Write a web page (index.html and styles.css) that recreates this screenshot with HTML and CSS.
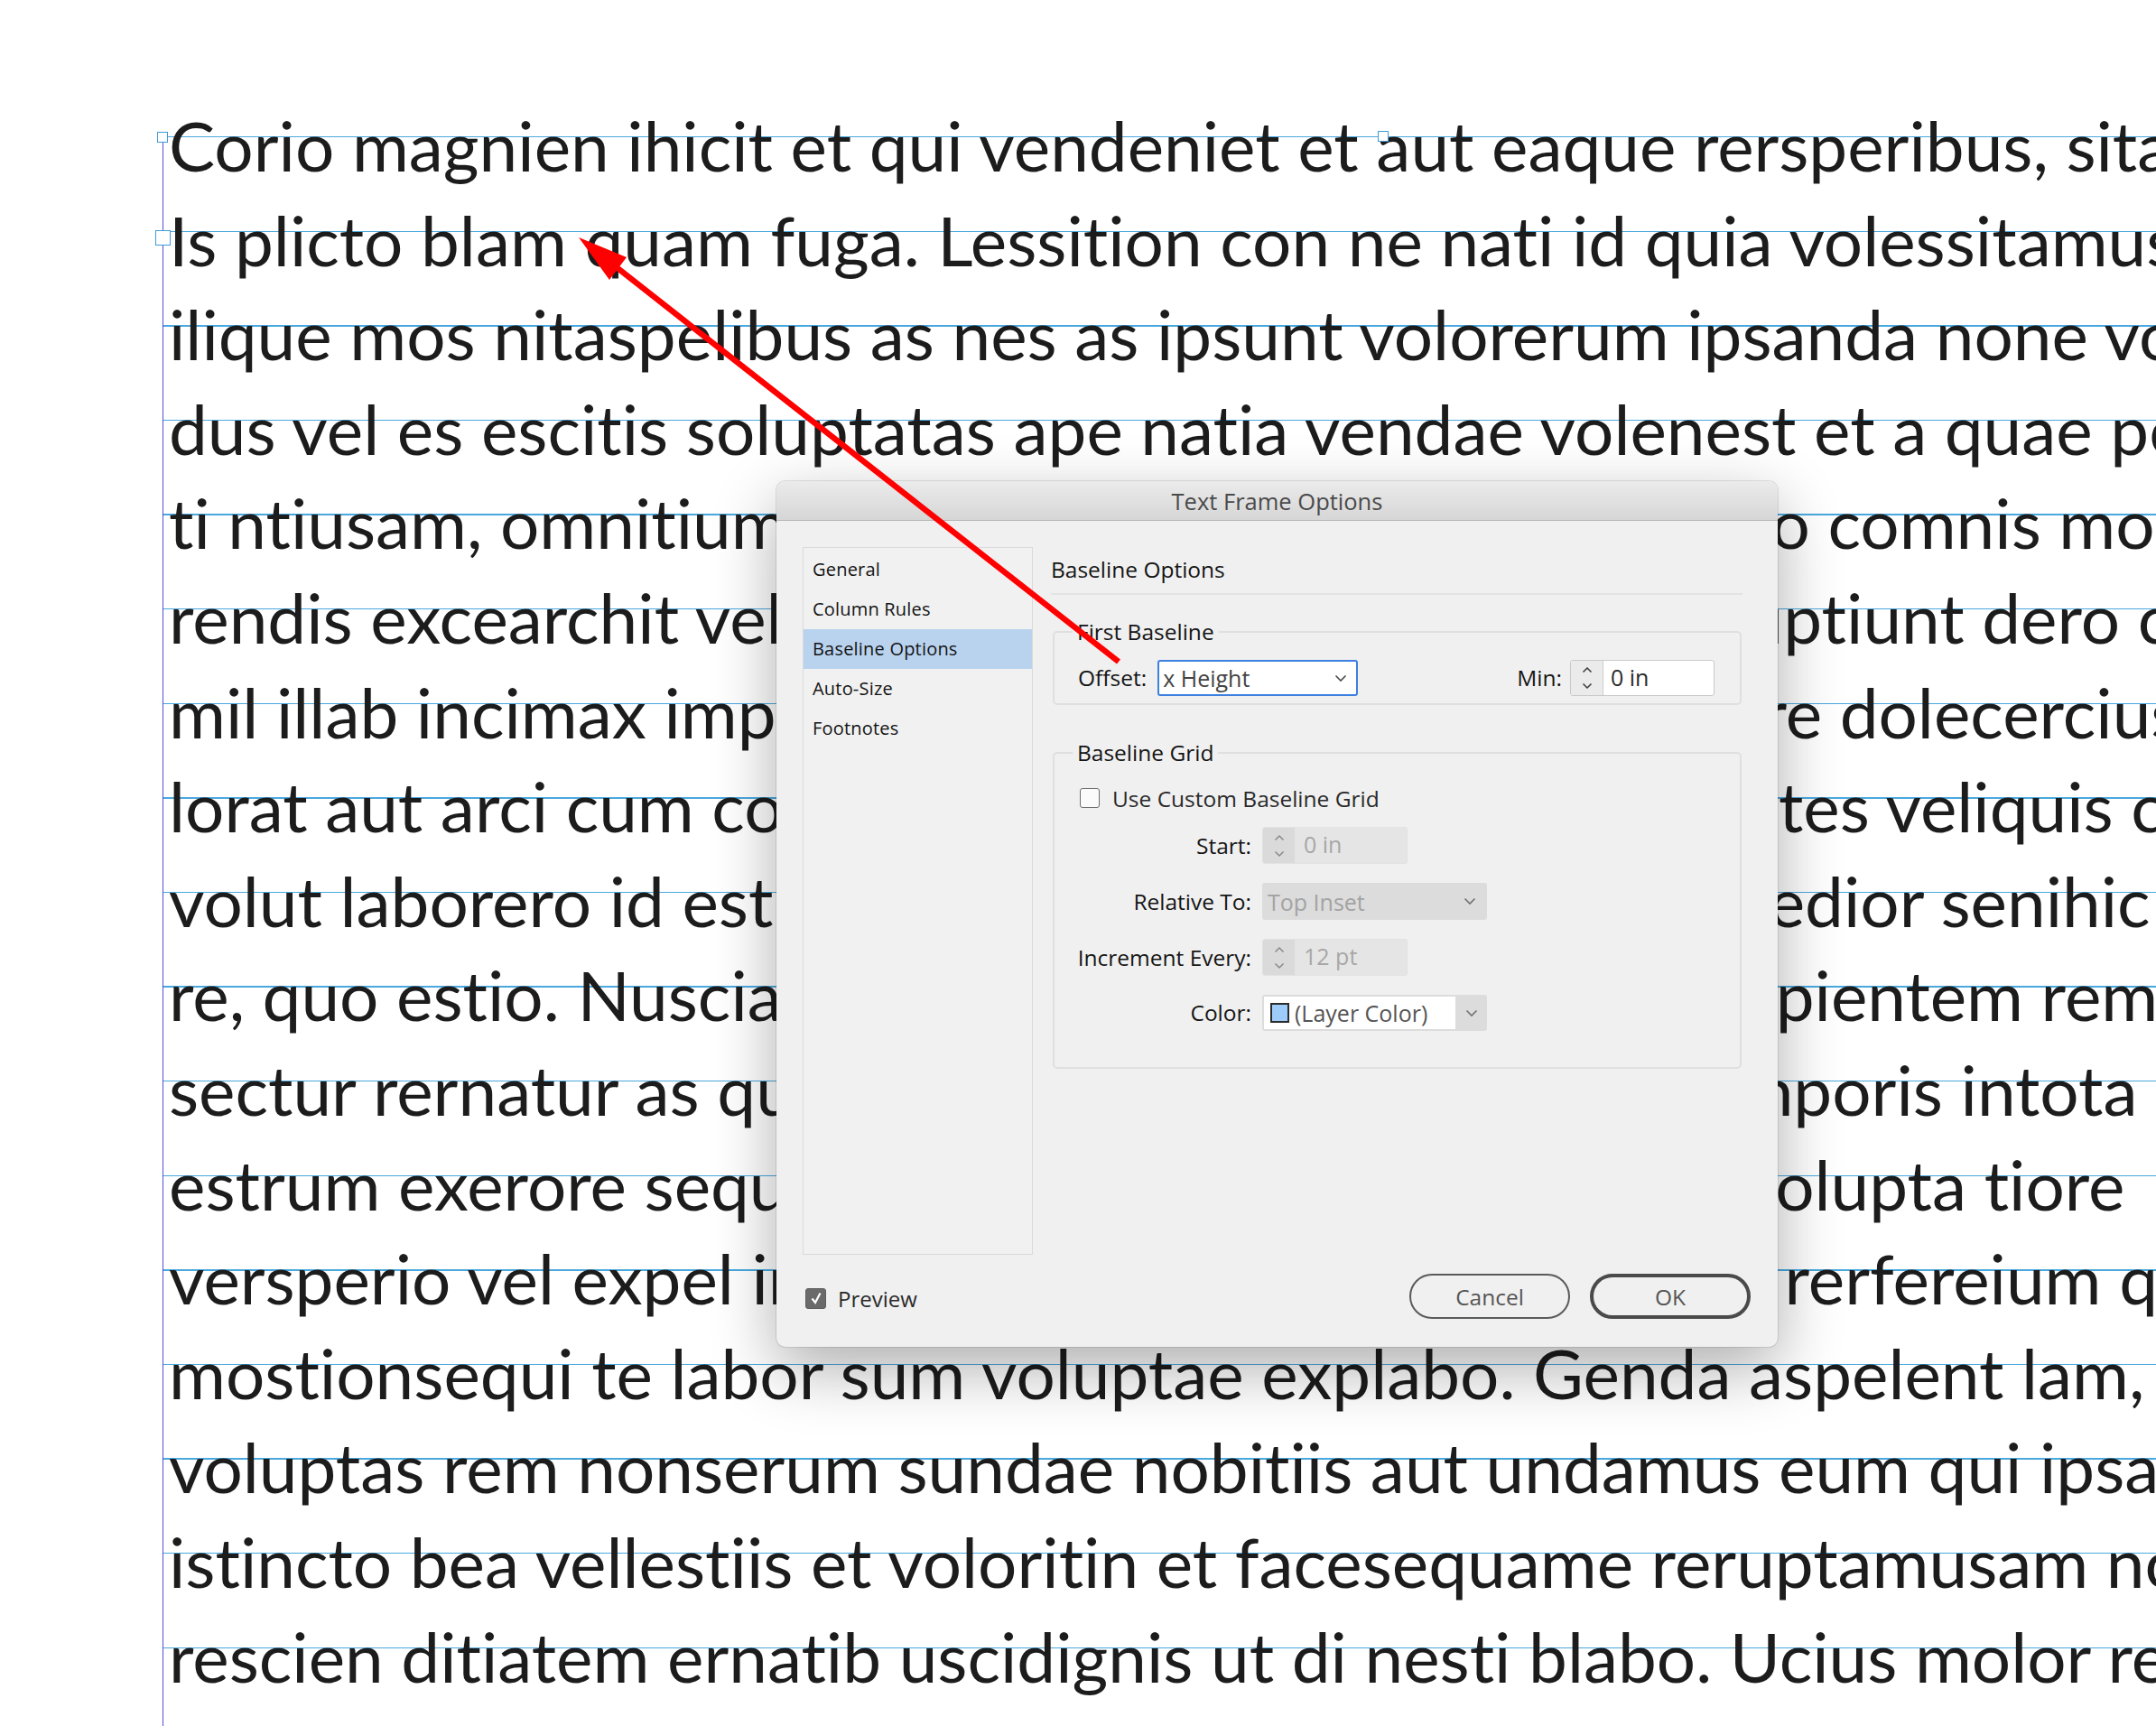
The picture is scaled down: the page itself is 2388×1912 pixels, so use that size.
FILE: index.html
```html
<!DOCTYPE html>
<html lang="en">
<head>
<meta charset="utf-8">
<title>Text Frame Options</title>
<link rel="stylesheet" href="styles.css">
</head>
<body>
<div class="page">
  <div class="frame">
    <div class="story">
      <div class="line">Corio magnien ihicit et qui vendeniet et aut eaque rersperibus, sitat</div>
      <div class="line">Is plicto blam quam fuga. Lessition con ne nati id quia volessitamus</div>
      <div class="line">ilique mos nitaspelibus as nes as ipsunt volorerum ipsanda none volor</div>
      <div class="line">dus vel es escitis soluptatas ape natia vendae volenest et a quae porem</div>
      <div class="line">ti ntiusam, omnitium aut ut aut quatem nonsequi di, to comnis mo</div>
      <div class="line">rendis excearchit vel ipsande nim quid quos, cum voluptiunt dero c</div>
      <div class="line">mil illab incimax imporem ut aliqui officiis quos ventore dolecercius</div>
      <div class="line">lorat aut arci cum consequi a ulparum estrum doloreptes veliquis c</div>
      <div class="line">volut laborero id est, se moluptaur aut quam faccus pedior senihic</div>
      <div class="line">re, quo estio. Nusciassim acea quiatur ab eium rem sapientem rem</div>
      <div class="line">sectur rernatur as quatur maiorer ferrum dolorum temporis intota</div>
      <div class="line">estrum exerore sequam, non ero eos simus voluptat volupta tiore</div>
      <div class="line">versperio vel expel inctu, consequi volore omni quam rerfereium q</div>
      <div class="line">mostionsequi te labor sum voluptae explabo. Genda aspelent lam, quis</div>
      <div class="line">voluptas rem nonserum sundae nobitiis aut undamus eum qui ipsapid</div>
      <div class="line">istincto bea vellestiis et voloritin et facesequame reruptamusam nos</div>
      <div class="line">rescien ditiatem ernatib uscidignis ut di nesti blabo. Ucius molor rem</div>
    </div>
  </div>

  <span class="handle handle-tl"></span>
  <span class="handle handle-in"></span>
  <span class="handle handle-tc"></span>

  <div class="dialog">
    <div class="titlebar">Text Frame Options</div>
    <div class="dialog-body">
      <ul class="sidebar">
        <li class="nav-item">General</li>
        <li class="nav-item">Column Rules</li>
        <li class="nav-item selected">Baseline Options</li>
        <li class="nav-item">Auto-Size</li>
        <li class="nav-item">Footnotes</li>
      </ul>
      <div class="panel">
        <div class="panel-title">Baseline Options</div>
        <div class="separator"></div>

        <div class="group group-first">
          <div class="group-title">First Baseline</div>
          <div class="fb-row">
            <span class="label">Offset:</span>
            <div class="select select-focus">
              <span class="select-text">x Height</span>
              <svg class="chev" width="14" height="9" viewBox="0 0 14 9"><path d="M1.5 1.5 L7 7 L12.5 1.5" fill="none" stroke="#4a4a4a" stroke-width="1.6"/></svg>
            </div>
            <span class="spacer"></span>
            <span class="label">Min:</span>
            <div class="spinner">
              <span class="spin-arrows">
                <svg width="14" height="30" viewBox="0 0 14 30"><path d="M2.5 8.5 L7 4 L11.5 8.5" fill="none" stroke="#3a3a3a" stroke-width="1.5"/><path d="M2.5 21.5 L7 26 L11.5 21.5" fill="none" stroke="#3a3a3a" stroke-width="1.5"/></svg>
              </span>
              <span class="spin-value">0 in</span>
            </div>
          </div>
        </div>

        <div class="group group-grid">
          <div class="group-title">Baseline Grid</div>
          <div class="check-row">
            <span class="checkbox"></span>
            <span class="check-label">Use Custom Baseline Grid</span>
          </div>
          <div class="form-grid">
            <span class="label right">Start:</span>
            <div class="spinner disabled">
              <span class="spin-arrows">
                <svg width="14" height="30" viewBox="0 0 14 30"><path d="M2.5 8.5 L7 4 L11.5 8.5" fill="none" stroke="#8a8a8a" stroke-width="1.5"/><path d="M2.5 21.5 L7 26 L11.5 21.5" fill="none" stroke="#8a8a8a" stroke-width="1.5"/></svg>
              </span>
              <span class="spin-value">0 in</span>
            </div>

            <span class="label right">Relative To:</span>
            <div class="select select-disabled">
              <span class="select-text">Top Inset</span>
              <svg class="chev" width="14" height="9" viewBox="0 0 14 9"><path d="M1.5 1.5 L7 7 L12.5 1.5" fill="none" stroke="#707070" stroke-width="1.6"/></svg>
            </div>

            <span class="label right">Increment Every:</span>
            <div class="spinner disabled">
              <span class="spin-arrows">
                <svg width="14" height="30" viewBox="0 0 14 30"><path d="M2.5 8.5 L7 4 L11.5 8.5" fill="none" stroke="#8a8a8a" stroke-width="1.5"/><path d="M2.5 21.5 L7 26 L11.5 21.5" fill="none" stroke="#8a8a8a" stroke-width="1.5"/></svg>
              </span>
              <span class="spin-value">12 pt</span>
            </div>

            <span class="label right">Color:</span>
            <div class="color-select">
              <span class="color-field"><span class="swatch"></span><span class="color-text">(Layer Color)</span></span>
              <span class="color-drop">
                <svg width="14" height="9" viewBox="0 0 14 9"><path d="M1.5 1.5 L7 7 L12.5 1.5" fill="none" stroke="#707070" stroke-width="1.6"/></svg>
              </span>
            </div>
          </div>
        </div>
      </div>
    </div>
    <div class="dialog-footer">
      <span class="checkbox checked">
        <svg width="14" height="16" viewBox="0 0 14 16"><path d="M2.5 8.5 L6 13 L11.5 2.5" fill="none" stroke="#ffffff" stroke-width="2.2"/></svg>
      </span>
      <span class="preview-label">Preview</span>
      <span class="spacer"></span>
      <button class="btn btn-cancel">Cancel</button>
      <button class="btn btn-ok">OK</button>
    </div>
  </div>

  <svg class="arrow" width="2388" height="1912" viewBox="0 0 2388 1912">
    <line x1="684" y1="297" x2="1239" y2="733" stroke="#ff0000" stroke-width="6.5"/>
    <polygon points="641,263 675,310 694,285" fill="#ff0000"/>
  </svg>
</div>
</body>
</html>
```

FILE: styles.css
```css
html, body {
  margin: 0;
  padding: 0;
  width: 2388px;
  height: 1912px;
  overflow: hidden;
  background: #ffffff;
}

.page {
  position: relative;
  width: 2388px;
  height: 1912px;
  overflow: hidden;
  background: #ffffff;
}

/* ---------- text frame ---------- */
.frame {
  margin-left: 180px;
  padding-top: 151px;
  height: 1761px;
  background-color: #ffffff;
}

.story {
  height: 1761px;
  border-left: 1.5px solid #4e4ee0;
  background-image: repeating-linear-gradient(to bottom, #4aa8de 0px, #4aa8de 1.4px, transparent 1.4px, transparent 104.6px);
  padding-left: 6px;
  overflow: visible;
}

.line {
  position: relative;
  top: -43px;
  height: 104.6px;
  line-height: 104.6px;
  font-family: "Lato", "Liberation Sans", sans-serif;
  font-size: 76.5px;
  font-variant-ligatures: none;
  color: #1c1c1c;
  white-space: nowrap;
}

/* frame handles */
.handle {
  position: absolute;
  box-sizing: border-box;
  background: #ffffff;
  border: 1.5px solid #3f9bd8;
}
.handle-tl { left: 174px; top: 146px; width: 12px; height: 12px; }
.handle-in { left: 172px; top: 255px; width: 17px; height: 17px; }
.handle-tc { left: 1526px; top: 145px; width: 12px; height: 12px; }

/* ---------- dialog ---------- */
.dialog {
  position: absolute;
  left: 860px;
  top: 533px;
  width: 1109px;
  height: 959px;
  box-sizing: border-box;
  display: flex;
  flex-direction: column;
  background: #f0f0f0;
  border-radius: 10px;
  overflow: hidden;
  box-shadow: 0 24px 70px rgba(0, 0, 0, 0.32), 0 0 0 1px rgba(0, 0, 0, 0.10);
  font-family: "Open Sans", "Liberation Sans", sans-serif;
  color: #151515;
}

.titlebar {
  height: 44px;
  box-sizing: border-box;
  flex: none;
  background: linear-gradient(to bottom, #ebebeb, #d6d6d6);
  border-bottom: 1px solid #b8b8b8;
  text-align: center;
  font-size: 25.5px;
  line-height: 44px;
  color: #4a4a4a;
}

.dialog-body {
  flex: 1;
  display: flex;
  padding: 29px 39px 0 29px;
}

.sidebar {
  list-style: none;
  margin: 0;
  padding: 2px 0 0 0;
  width: 255px;
  box-sizing: border-box;
  border: 1.5px solid #dadada;
  background: #f1f1f1;
}

.nav-item {
  height: 44px;
  line-height: 44px;
  padding-left: 10px;
  font-size: 20px;
  letter-spacing: 0.2px;
  color: #141414;
}

.nav-item.selected {
  background: #b9d3ef;
}

.panel {
  flex: 1;
  margin-left: 20px;
}

.panel-title {
  padding-top: 10px;
  font-size: 24.5px;
  line-height: 30px;
}

.separator {
  margin-top: 11px;
  height: 2px;
  background: #e3e3e3;
}

.group {
  margin: 0 1px 0 2px;
  border: 2px solid #dfdfdf;
  border-radius: 5px;
  padding: 0 26px 0 26px;
}

.group-title {
  display: inline-block;
  margin: -16px 0 0 -6px;
  padding: 0 5px;
  background: #f0f0f0;
  font-size: 24.5px;
  line-height: 30px;
  vertical-align: top;
}

.group-first {
  margin-top: 40px;
  padding-bottom: 8px;
  padding-right: 28px;
}

.fb-row {
  margin-top: 8px;
  display: flex;
  align-items: center;
  height: 40px;
}

.label {
  font-size: 24.5px;
  line-height: 30px;
  white-space: nowrap;
}

.label.right {
  text-align: right;
}

.spacer {
  flex: 1;
}

.select {
  box-sizing: border-box;
  height: 40px;
  display: flex;
  align-items: center;
  border-radius: 3px;
  font-size: 25px;
}

.select-focus {
  width: 222px;
  margin-left: 12px;
  background: #ffffff;
  border: 2px solid #3d80e0;
  color: #444444;
  padding: 0 10px 0 4px;
}

.select-text {
  flex: 1;
  white-space: nowrap;
}

.chev {
  flex: none;
}

.spinner {
  box-sizing: border-box;
  width: 160px;
  height: 40px;
  display: flex;
  border: 1.5px solid #c9c9c9;
  border-radius: 3px;
  background: #ffffff;
  margin-left: 9px;
  overflow: hidden;
}

.spin-arrows {
  width: 35px;
  flex: none;
  display: flex;
  align-items: center;
  justify-content: center;
  background: #ebebeb;
  border-right: 1.5px solid #cdcdcd;
}

.spin-value {
  padding-left: 8px;
  font-size: 25px;
  line-height: 37px;
  color: #2a2a2a;
}

.group-grid {
  margin-top: 52px;
  padding-bottom: 40px;
}

.check-row {
  margin-top: 12px;
  display: flex;
  align-items: center;
  height: 30px;
}

.checkbox {
  box-sizing: border-box;
  width: 22px;
  height: 22px;
  flex: none;
  border: 1.5px solid #6e6e6e;
  border-radius: 3px;
  background: #fbfbfb;
  margin-left: 2px;
  display: flex;
  align-items: center;
  justify-content: center;
}

.check-label {
  margin-left: 14px;
  font-size: 24.5px;
  color: #2a2a2a;
}

.form-grid {
  margin-top: 17px;
  display: grid;
  grid-template-columns: 192px auto;
  column-gap: 12px;
  row-gap: 21px;
  align-items: center;
  justify-items: start;
}

.form-grid .label {
  justify-self: end;
}

.form-grid .spinner {
  margin-left: 0;
  width: 161px;
  height: 41px;
}

.spinner.disabled {
  background: #e5e5e5;
  border-color: #e2e2e2;
}

.spinner.disabled .spin-arrows {
  background: #dadada;
  border-right: none;
}

.spinner.disabled .spin-value {
  color: #a7a7a7;
  padding-left: 10px;
}

.select-disabled {
  width: 249px;
  height: 41px;
  background: #dcdcdc;
  color: #a3a3a3;
  padding: 0 12px 0 6px;
}

.color-select {
  display: flex;
  width: 249px;
  height: 40px;
  border-radius: 3px;
  overflow: hidden;
  background: #dcdcdc;
}

.color-field {
  width: 212px;
  box-sizing: border-box;
  margin: 2px 0 2px 2px;
  background: #ffffff;
  display: flex;
  align-items: center;
  padding-left: 7px;
}

.swatch {
  width: 21px;
  height: 22px;
  box-sizing: border-box;
  border: 2px solid #2b2b2b;
  background: #9dccfb;
  flex: none;
}

.color-text {
  margin-left: 6px;
  font-size: 25px;
  color: #555555;
  white-space: nowrap;
}

.color-drop {
  flex: 1;
  display: flex;
  align-items: center;
  justify-content: center;
}

/* footer */
.dialog-footer {
  flex: none;
  height: 102px;
  box-sizing: border-box;
  display: flex;
  align-items: center;
  padding: 0 30px 10px 32px;
}

.checkbox.checked {
  margin-left: 0;
  background: #6a6a6a;
  border-color: #5e5e5e;
  width: 23px;
  height: 23px;
  margin-top: 4px;
}

.preview-label {
  margin-left: 13px;
  margin-top: 4px;
  font-size: 24px;
  color: #2a2a2a;
}

.btn {
  box-sizing: border-box;
  width: 178px;
  height: 50px;
  border-radius: 25px;
  background: #f0f0f0;
  font-family: "Open Sans", "Liberation Sans", sans-serif;
  font-size: 24.5px;
  color: #555555;
  padding: 0;
}

.btn-cancel {
  border: 2px solid #5a5a5a;
}

.btn-ok {
  margin-left: 22px;
  border: 4px solid #4a4a4a;
}

/* annotation arrow */
.arrow {
  position: absolute;
  left: 0;
  top: 0;
  pointer-events: none;
}
```
